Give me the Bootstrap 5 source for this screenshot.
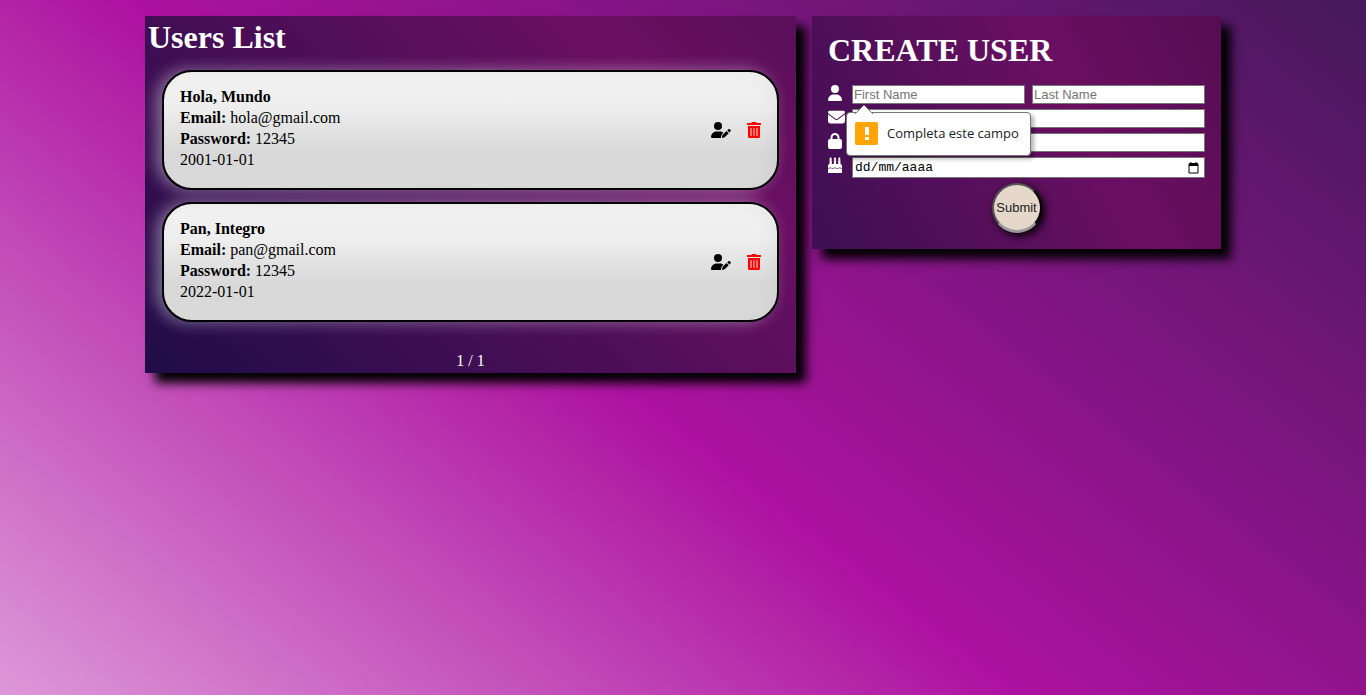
<!DOCTYPE html>
<html lang="es">
<head>
<meta charset="utf-8">
<meta name="viewport" content="width=device-width, initial-scale=1">
<title>Users</title>
<link href="https://cdn.jsdelivr.net/npm/bootstrap@5.3.0/dist/css/bootstrap.min.css" rel="stylesheet">
<style>
body {
  font-family: "Liberation Serif", serif;
  line-height: 21px;
  color: #000;
  background: linear-gradient(38deg, #dd98d8 0%, #ad12a0 45%, #45195b 100%) no-repeat;
  min-height: 100vh;
}
.page-grid { max-width: 1108px; }
@media (min-width: 900px) {
  .page-grid { grid-template-columns: minmax(0, 651fr) minmax(0, 409fr); }
}
.panel { color: #fff; box-shadow: 10px 10px 10px #000; }
.panel-users { background: linear-gradient(45deg, #1f0d48, #6a0f62 78%, #5a0f58); }
.panel-form { background: linear-gradient(62deg, #3d0f52, #6a0f62 64%, #560c52); }
.panel h1 { font-size: 32px; font-weight: 700; line-height: 37px; }
.users-title { padding: 3px; }
.users-stack { padding: 11px 17px 28px; gap: 12px; }
.user-card {
  color: #000;
  border: 2px solid #000;
  border-radius: 30px;
  background: linear-gradient(#f2f2f2, #eee 30%, #d8d8d8 70%, #dadada);
  box-shadow: -6px 0 16px rgba(255,255,255,.4), inset -8px 4px 16px rgba(0,0,0,.03);
  min-height: 120px;
}
.user-info { padding-bottom: 4px; }
.pager { padding-bottom: 2px; }
.btn-icon { border: 0; background: none; padding: 0; line-height: 0; }
.form-line { gap: 7px; margin-bottom: 5px; }
.name-fields { flex: 1 1 0; min-width: 0; gap: 7px; }
.field-icon { flex: 0 0 17px; line-height: 0; }
.field {
  font: 13px "Liberation Sans", sans-serif;
  color: #000;
  background: #fff;
  border: 1px solid #767676;
  border-radius: 0;
  padding: 1px;
  height: 19px;
  min-width: 0;
  flex: 1 1 0;
}
.field::placeholder { color: #757575; }
.date-field { display: flex; height: 21px; }
.date-field input { font: 13px "Liberation Mono", monospace; border: 0; padding: 0 1px; min-width: 0; flex: 1; outline: 0; }
.date-field input::placeholder { color: #000; opacity: 1; }
.btn-submit {
  width: 50px; height: 50px;
  border-radius: 50%;
  border: 2px solid;
  border-bottom-width: 3px;
  border-color: #555 #000 #999 #555;
  background: #e5d8ca;
  color: #222;
  font: 13px "Liberation Sans", sans-serif;
  padding: 0;
  box-shadow: 3px 3px 8px #000;
}
.hint {
  top: 27px; left: -6px;
  height: 44px;
  white-space: nowrap;
  background: #fff;
  color: #222;
  border: 1px solid #777;
  border-radius: 4px;
  box-shadow: 3px 3px 4px rgba(0,0,0,.3);
  font: 13px "Open Sans", sans-serif;
  z-index: 5;
  gap: 9px;
  padding: 0 11px 2px 8px;
}
.hint-arrow { top: -9px; left: 8px; }
</style>
</head>
<body>
<svg class="d-none" aria-hidden="true">
  <symbol id="i-edit" viewBox="0 0 640 512"><path d="M224 256A128 128 0 1 0 224 0a128 128 0 0 0 0 256zm-46 48C80 304 0 384 0 482c0 17 13 30 30 30h293c-4-10-4-20-2-30l15-60c4-14 11-27 21-37l39-39c-28-26-65-42-126-42z"/><path d="M549 236c16-16 41-16 57 0l14 14c16 16 16 41 0 57l-30 29-71-71zM375 409l121-121 71 71-121 121c-4 4-9 7-15 8l-60 20c-11 2-22-8-19-19l15-65c1-6 4-11 8-15z"/></symbol>
  <symbol id="i-trash" viewBox="0 0 448 512"><path fill-rule="evenodd" d="M32 464a48 48 0 0 0 48 48h288a48 48 0 0 0 48-48V128H32zm272-256a16 16 0 0 1 32 0v224a16 16 0 0 1-32 0zm-96 0a16 16 0 0 1 32 0v224a16 16 0 0 1-32 0zm-96 0a16 16 0 0 1 32 0v224a16 16 0 0 1-32 0zM432 32H312l-9-19a24 24 0 0 0-22-13H167a24 24 0 0 0-22 13l-9 19H16A16 16 0 0 0 0 48v32a16 16 0 0 0 16 16h416a16 16 0 0 0 16-16V48a16 16 0 0 0-16-16z"/></symbol>
  <symbol id="i-user" viewBox="0 0 448 512"><path d="M224 256A128 128 0 1 0 224 0a128 128 0 0 0 0 256zm-46 48C80 304 0 384 0 482c0 17 13 30 30 30h388c17 0 30-13 30-30 0-98-80-178-178-178z"/></symbol>
  <symbol id="i-mail" viewBox="0 0 512 384"><path d="M48 0a48 48 0 0 0-29 86l218 164a32 32 0 0 0 38 0L493 86A48 48 0 0 0 464 0zM0 112v208a64 64 0 0 0 64 64h384a64 64 0 0 0 64-64V112L294 275a64 64 0 0 1-76 0z"/></symbol>
  <symbol id="i-lock" viewBox="0 0 448 512"><path fill-rule="evenodd" d="M144 144v48h160v-48a80 80 0 0 0-160 0zm-64 48v-48a144 144 0 0 1 288 0v48h16a64 64 0 0 1 64 64v192a64 64 0 0 1-64 64H64a64 64 0 0 1-64-64V256a64 64 0 0 1 64-64z"/></symbol>
  <symbol id="i-cake" viewBox="0 0 448 512"><path d="M86 0c12 16 37 38 37 66 0 22-16 38-37 38S48 88 48 66C48 38 74 16 86 0zm138 0c12 16 37 38 37 66 0 22-16 38-37 38s-37-16-37-38c0-28 25-50 37-66zm138 0c12 16 37 38 37 66 0 22-16 38-37 38s-37-16-37-38c0-28 25-50 37-66zM50 100h72v124h66V100h72v124h66V100h72v124a56 56 0 0 1 50 56v76c-30 0-40-24-74-24s-40 24-75 24-40-24-75-24-40 24-75 24-40-24-75-24-44 24-74 24v-76a56 56 0 0 1 50-56zM0 384c34 0 43-22 74-22s42 22 75 22 43-22 75-22 42 22 75 22 43-22 75-22 42 22 74 22v128H0z"/></symbol>
</svg>
<main class="page-grid mx-auto d-grid align-items-start gap-3 pt-3 px-3">
  <section class="panel panel-users">
    <h1 class="users-title m-0">Users List</h1>
    <div class="users-stack d-flex flex-column">
      <article class="user-card d-flex align-items-center justify-content-between px-3">
        <div class="user-info"><b>Hola, Mundo</b><br><b>Email:</b> hola@gmail.com<br><b>Password:</b> 12345<br>2001-01-01</div>
        <div class="d-flex gap-3 align-items-center">
          <button class="btn-icon" aria-label="Edit"><svg width="20" height="16"><use href="#i-edit"/></svg></button>
          <button class="btn-icon" aria-label="Delete"><svg width="14" height="16" fill="red"><use href="#i-trash"/></svg></button>
        </div>
      </article>
      <article class="user-card d-flex align-items-center justify-content-between px-3">
        <div class="user-info"><b>Pan, Integro</b><br><b>Email:</b> pan@gmail.com<br><b>Password:</b> 12345<br>2022-01-01</div>
        <div class="d-flex gap-3 align-items-center">
          <button class="btn-icon" aria-label="Edit"><svg width="20" height="16"><use href="#i-edit"/></svg></button>
          <button class="btn-icon" aria-label="Delete"><svg width="14" height="16" fill="red"><use href="#i-trash"/></svg></button>
        </div>
      </article>
    </div>
    <div class="pager text-center">1 / 1</div>
  </section>
  <section class="panel panel-form p-3">
    <h1 class="mb-3">CREATE USER</h1>
    <form>
      <div class="form-line d-flex">
        <label class="field-icon" for="first" aria-label="First Name"><svg width="14" height="16" fill="#fff"><use href="#i-user"/></svg></label>
        <div class="name-fields position-relative d-flex">
          <input class="field" id="first" placeholder="First Name">
          <input class="field" placeholder="Last Name" aria-label="Last Name">
          <div class="hint position-absolute d-flex align-items-center" role="alert">
            <svg class="hint-arrow position-absolute" width="18" height="10"><path d="M0 10L9 1l9 9" fill="#fff" stroke="#777"/></svg>
            <svg width="23" height="23"><rect width="23" height="23" rx="2" fill="#ffa400"/><path d="M10 5h4v8h-4zM10 15h4v3h-4z" fill="#fff"/></svg>
            <span>Completa este campo</span>
          </div>
        </div>
      </div>
      <div class="form-line d-flex">
        <label class="field-icon" for="email" aria-label="Email"><svg width="17" height="16" fill="#fff"><use href="#i-mail"/></svg></label>
        <input class="field" id="email" type="email">
      </div>
      <div class="form-line d-flex">
        <label class="field-icon" for="pass" aria-label="Password"><svg width="14" height="16" fill="#fff"><use href="#i-lock"/></svg></label>
        <input class="field" id="pass" type="password">
      </div>
      <div class="form-line d-flex">
        <label class="field-icon" for="birth" aria-label="Birthday"><svg width="14" height="16" fill="#fff"><use href="#i-cake"/></svg></label>
        <div class="field date-field align-items-center">
          <input id="birth" placeholder="dd/mm/aaaa">
          <svg width="18" height="14"><path d="M4 3h9v9H4zM6 1v2M11 1v2" fill="none" stroke="#000"/><path d="M4 2h9v3H4z"/></svg>
        </div>
      </div>
      <div class="d-flex justify-content-center"><button type="button" class="btn-submit">Submit</button></div>
    </form>
  </section>
</main>
<script src="https://cdn.jsdelivr.net/npm/bootstrap@5.3.0/dist/js/bootstrap.bundle.min.js"></script>
</body>
</html>
